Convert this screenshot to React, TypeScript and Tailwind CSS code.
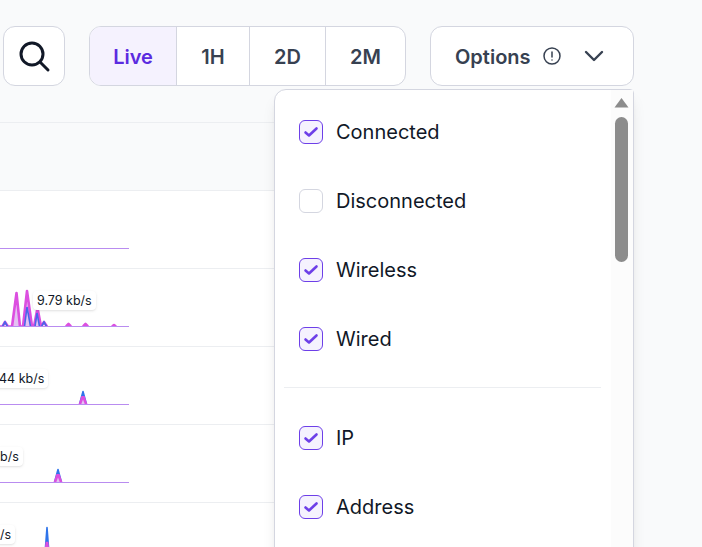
import React from "react";

const font = { fontFamily: '"Inter", "Noto Sans", sans-serif' };

function Check({ on }: { on: boolean }) {
  return (
    <span className={`flex h-6 w-6 shrink-0 items-center justify-center rounded-md border ${on ? "border-[#6d3fe8] bg-[#f5f2fe]" : "border-[#d4d6e0] bg-white"}`}>
      {on && (
        <svg width="16" height="16" viewBox="0 0 16 16" fill="none">
          <path d="M2.5 8.5 L6 11.5 L13.5 4.5" stroke="#6d3fe8" strokeWidth="2.6" strokeLinecap="round" strokeLinejoin="round" />
        </svg>
      )}
    </span>
  );
}

function Item({ label, on = true }: { label: string; on?: boolean }) {
  return (
    <div className="flex h-[69px] items-center gap-[13px] pl-6">
      <Check on={on} />
      <span className="text-[20px] leading-none text-[#111827]">{label}</span>
    </div>
  );
}

function Spike({ x, w, h, split }: { x: number; w: number; h: number; split: number }) {
  const inset = 1 - split;
  return (
    <g strokeLinejoin="round">
      <path d={`M${x - w + 1} 39.5 L${x} ${39.5 - h + 1} L${x + w - 1} 39.5 Z`} fill="#2f74ea" stroke="#2f74ea" strokeWidth="1.6" />
      <path d={`M${x - w} 39.5 L${x - (w * inset) + 0.2} ${39.5 - h * split} L${x + w * inset - 0.2} ${39.5 - h * split} L${x + w} 39.5 Z`} fill="#dc4fe0" />
      <path d={`M${x - w + 2.6} 39.5 L${x} ${39.5 - h * 0.35} L${x + w - 2.6} 39.5 Z`} fill="#e3c2f2" />
    </g>
  );
}

function Spark({ peaks }: { peaks: [number, number, number, number][] }) {
  return (
    <svg width="129" height="40" viewBox="0 0 129 40" className="block">
      {peaks.map(([x, w, h, split], i) => (
        <Spike key={i} x={x} w={w} h={h} split={split} />
      ))}
      <line x1="0" y1="39.5" x2="129" y2="39.5" stroke="#b98cf0" strokeWidth="1" />
    </svg>
  );
}

function Busy() {
  const pink = "M0 39.5 L2.5 39.5 L5 35 L8 39.5 L12 39.5 L16.5 6 L20 39.5 L23 39.5 L27 4 L32 39.5 L34 39.5 L37.5 21 L41 39.5 L44 35 L47 39.5 M66 39.5 L68.5 37 L71 39.5 M83 39.5 L85.5 37 L88 39.5 M112 39.5 L114 38 L116 39.5";
  const fill = "M12 39.5 L16.5 6 L20 39.5 Z M23 39.5 L27 4 L32 39.5 Z M34 39.5 L37.5 21 L41 39.5 Z";
  const blue = "M2.5 39.5 L5 35 L7.5 39.5 M24.5 39.5 L27 20 L30.5 39.5 M35 39.5 L37 26 L39.5 39.5 M41.5 39.5 L44 35 L46.5 39.5";
  return (
    <svg width="129" height="40" viewBox="0 0 129 40" className="block">
      <path d={fill} fill="#e3c2f2" />
      <path d={pink} fill="none" stroke="#dc4fe0" strokeWidth="2.6" strokeLinejoin="round" />
      <path d={blue} fill="none" stroke="#4a66ea" strokeWidth="1.6" />
      <line x1="0" y1="39.5" x2="129" y2="39.5" stroke="#b98cf0" strokeWidth="1" />
    </svg>
  );
}

function Tip({ text, left }: { text: string; left: string }) {
  return (
    <span className={`absolute top-[22px] ${left} whitespace-nowrap rounded bg-white px-1 py-0.5 text-[12.5px] leading-[15px] text-[#111827] shadow-sm`}>
      {text}
    </span>
  );
}

function Row({ children, tip }: { children: React.ReactNode; tip?: React.ReactNode }) {
  return (
    <div className="relative h-[78px] border-b border-[#eceef1] bg-white">
      <div className="absolute left-0 top-[18px]">{children}</div>
      {tip}
    </div>
  );
}

export default function App() {
  return (
    <div className="relative h-[547px] w-[702px] overflow-hidden bg-[#f9fafb]" style={font}>
      <div className="flex items-start pl-[3px] pt-[26px]">
        <button className="flex h-[60px] w-[62px] items-center justify-center rounded-xl border border-[#d4d6e0] bg-white">
          <svg width="34" height="34" viewBox="0 0 34 34" fill="none" stroke="#111827" strokeWidth="3" strokeLinecap="round">
            <circle cx="15" cy="15" r="11" />
            <path d="M23 23 L31 31" />
          </svg>
        </button>
        <div className="ml-6 flex h-[60px] w-[317px] overflow-hidden rounded-xl border border-[#d4d6e0] bg-white text-[20px] font-semibold text-[#374151]">
          <div className="flex w-[87px] items-center justify-center border-r border-[#d4d6e0] bg-[#f5f2fe] pt-px text-[#5b2be0]">Live</div>
          <div className="flex w-[73px] items-center justify-center border-r border-[#d4d6e0] pt-px">1H</div>
          <div className="flex w-[76px] items-center justify-center border-r border-[#d4d6e0] pt-px">2D</div>
          <div className="flex flex-1 items-center justify-center pt-px">2M</div>
        </div>
        <button className="ml-6 flex h-[60px] w-[204px] items-center rounded-xl border border-[#d4d6e0] bg-white pl-6 text-[20px] font-semibold text-[#374151]">
          <span className="w-[76px] pt-px text-left">Options</span>
          <svg className="ml-3" width="18" height="18" viewBox="0 0 18 18" fill="none" stroke="#374151" strokeWidth="1.5" strokeLinecap="round">
            <circle cx="9" cy="9" r="8" />
            <path d="M9 5 V10 M9 13 V13.1" />
          </svg>
          <svg className="ml-[23px]" width="20" height="12" viewBox="0 0 20 12" fill="none" stroke="#374151" strokeWidth="2.4" strokeLinecap="round" strokeLinejoin="round">
            <path d="M2 2 L10 10 L18 2" />
          </svg>
        </button>
      </div>

      <div className="mt-9 w-[634px] border-t border-[#eceef1]">
        <div className="h-[68px] border-b border-[#eceef1]" />
        <Row><Spark peaks={[]} /></Row>
        <Row tip={<Tip text="9.79 kb/s" left="left-[33px]" />}>
          <Busy />
        </Row>
        <Row tip={<Tip text="44 kb/s" left="left-[-5px]" />}><Spark peaks={[[83, 4.5, 14, 0.6]]} /></Row>
        <Row tip={<Tip text="b/s" left="left-[-4px]" />}><Spark peaks={[[58, 4.5, 14, 0.6]]} /></Row>
        <Row tip={<Tip text="/s" left="left-[-4px]" />}><Spark peaks={[[47, 3.5, 34, 0.55]]} /></Row>
      </div>

      <div className="absolute left-[274px] top-[89px] h-[500px] w-[360px] rounded-tl-xl rounded-tr-sm border border-[#d4d6e0] bg-white shadow-lg">
        <div className="pt-[7px]">
          <Item label="Connected" />
          <Item label="Disconnected" on={false} />
          <Item label="Wireless" />
          <Item label="Wired" />
          <div className="mx-[9px] mb-[15px] mt-[14px] w-[317px] border-t border-[#eceef1]" />
          <Item label="IP" />
          <Item label="Address" />
        </div>
        <div className="absolute right-0 top-0 h-full w-[22px] bg-[#fcfcfc]">
          <svg width="15" height="11" viewBox="0 0 15 11" className="absolute left-[3px] top-[7px]">
            <path d="M7.5 1 L14.5 10.5 L0.5 10.5 Z" fill="#8c8c8c" />
          </svg>
          <div className="absolute left-[4px] top-[27px] h-[145px] w-[13px] rounded-full bg-[#8c8c8c]" />
        </div>
      </div>
    </div>
  );
}
